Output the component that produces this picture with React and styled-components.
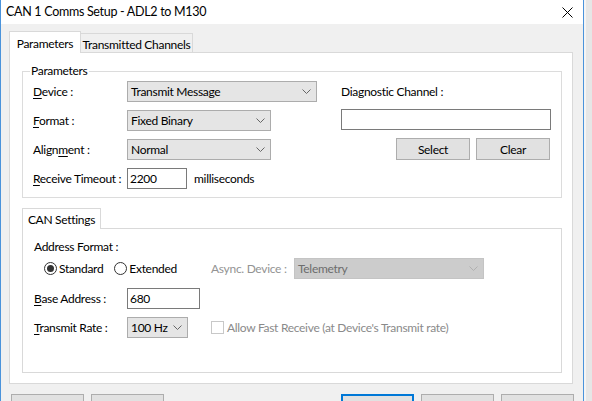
import React from 'react';
import styled, { createGlobalStyle } from 'styled-components';

const Global = createGlobalStyle`
  html, body { margin: 0; padding: 0; background: #e4e4e4; }
  body { font-family: Lato, "Noto Sans", "Liberation Sans", sans-serif; font-size: 12px; letter-spacing: -0.3px; color: #000; }
  #root { width: 592px; height: 401px; }
`;

const Screen = styled.div`
  width: 592px;
  height: 401px;
  overflow: hidden;
  display: flex;
  background: #e4e4e4;
`;

const Win = styled.div`
  width: 582px;
  flex: none;
  border-left: 1px solid #4a93db;
  border-right: 1px solid #4a93db;
  display: flex;
  flex-direction: column;
  background: #f0f0f0;
`;

const Backdrop = styled.div`
  flex: 1;
  background: #e6e6e6;
  border-left: 2px solid #f4f4f4;
`;

const TitleBar = styled.div`
  height: 24px;
  flex: none;
  background: #fff;
  display: flex;
  align-items: center;
  justify-content: space-between;
  padding: 0 10px 0 5px;
`;

const Title = styled.div`
  font-size: 12.5px;
  line-height: 18px;
  color: #000;
`;

const Body = styled.div`
  display: flex;
  flex-direction: column;
  padding: 7px 10px 0 8px;
`;

const TabStrip = styled.div`
  display: flex;
  align-items: flex-end;
  height: 21px;
`;

const Tab = styled.div`
  box-sizing: border-box;
  width: ${p => p.$w}px;
  height: ${p => (p.$active ? 22 : 19)}px;
  margin-bottom: ${p => (p.$active ? -1 : 0)}px;
  margin-left: ${p => (p.$active ? 0 : -1)}px;
  position: relative;
  z-index: ${p => (p.$active ? 2 : 1)};
  background: ${p => (p.$active ? '#fff' : '#f0f0f0')};
  border: 1px solid #d9d9d9;
  border-bottom: none;
  display: flex;
  align-items: center;
  justify-content: center;
  padding-top: ${p => (p.$active ? 1 : 2)}px;
  white-space: nowrap;
`;

const TabPanel = styled.div`
  box-sizing: border-box;
  height: 332px;
  background: #fff;
  border: 1px solid #d9d9d9;
  padding: 10px 10px 0 12px;
  display: flex;
  flex-direction: column;
`;

const Group = styled.fieldset`
  margin: 0;
  padding: 0;
  min-width: 0;
  border: 1px solid #dcdcdc;
`;

const Legend = styled.legend`
  padding: 0 1px;
  margin-left: 7px;
  line-height: 16px;
`;

const GroupContent = styled.div`
  display: flex;
  padding: 2px 0 8px 10px;
`;

const LeftCol = styled.div`
  width: 308px;
  display: flex;
  flex-direction: column;
  gap: 8px;
`;

const RightCol = styled.div`
  width: 210px;
  display: flex;
  flex-direction: column;
`;

const Row = styled.div`
  display: flex;
  align-items: center;
  height: 21px;
  margin-top: ${p => p.$mt || 0}px;
  white-space: nowrap;
`;

const Label = styled.div`
  width: ${p => p.$w}px;
  flex: none;
  white-space: nowrap;
  color: ${p => (p.$disabled ? '#939393' : '#000')};
`;

const Key = styled.span`
  text-decoration: underline;
  text-underline-offset: 2px;
`;

const Combo = styled.div`
  box-sizing: border-box;
  width: ${p => p.$w}px;
  height: 21px;
  flex: none;
  display: flex;
  align-items: center;
  justify-content: space-between;
  padding: 0 5px 0 3px;
  border: 1px solid ${p => (p.$disabled ? '#c4c4c4' : '#acacac')};
  background: ${p => (p.$disabled ? '#cccccc' : '#e5e5e5')};
  color: ${p => (p.$disabled ? '#6d6d6d' : '#000')};
  white-space: nowrap;
`;

const TextBox = styled.div`
  box-sizing: border-box;
  width: ${p => p.$w}px;
  height: 21px;
  flex: none;
  border: 1px solid #7a7a7a;
  background: #fff;
  display: flex;
  align-items: center;
  padding-left: 2px;
  margin-top: ${p => p.$mt || 0}px;
`;

const Suffix = styled.span`
  margin-left: 7px;
`;

const ButtonRow = styled.div`
  display: flex;
  justify-content: flex-end;
  gap: 6px;
  padding-right: 1px;
  margin-top: 8px;
`;

const Button = styled.div`
  box-sizing: border-box;
  width: ${p => p.$w || 73}px;
  height: ${p => p.$h || 23}px;
  background: #e1e1e1;
  border: ${p => (p.$default ? '2px solid #0078d7' : '1px solid #adadad')};
  display: flex;
  align-items: center;
  justify-content: center;
  flex: none;
`;

const SubTabStrip = styled.div`
  display: flex;
  align-items: flex-end;
  height: 20px;
  margin-top: 10px;
`;

const SubTab = styled.div`
  box-sizing: border-box;
  width: 79px;
  height: 21px;
  margin-bottom: -1px;
  position: relative;
  z-index: 2;
  background: #fff;
  border: 1px solid #d9d9d9;
  border-bottom: none;
  display: flex;
  align-items: center;
  justify-content: center;
  padding-top: 1px;
  white-space: nowrap;
`;

const SubPanel = styled.div`
  box-sizing: border-box;
  height: 145px;
  background: #fff;
  border: 1px solid #d9d9d9;
  padding: 10px 0 0 11px;
  display: flex;
  flex-direction: column;
`;

const Caption = styled.div`
  line-height: 16px;
  height: 16px;
`;

const RadioGroup = styled.div`
  width: 177px;
  flex: none;
  display: flex;
  align-items: center;
  padding-left: 10px;
  box-sizing: border-box;
`;

const RadioItem = styled.label`
  display: flex;
  align-items: center;
  gap: 2px;
  margin-right: 11px;
`;

const RadioCircle = styled.span`
  box-sizing: border-box;
  width: 13px;
  height: 13px;
  border-radius: 50%;
  border: 1px solid #333;
  background: #fff;
  display: flex;
  align-items: center;
  justify-content: center;
  &::after {
    content: '';
    width: 7px;
    height: 7px;
    border-radius: 50%;
    background: ${p => (p.$checked ? '#333' : 'transparent')};
  }
`;

const CheckItem = styled.div`
  display: flex;
  align-items: center;
  gap: 3px;
  margin-left: 23px;
  color: #8a8a8a;
  white-space: nowrap;
`;

const CheckBox = styled.span`
  box-sizing: border-box;
  width: 13px;
  height: 13px;
  border: 1px solid #c8c8c8;
  background: #fff;
`;

const Footer = styled.div`
  display: flex;
  gap: 7px;
  margin: 10px -1px 0 0;
  padding: 0 0 0 2px;
`;

const Spacer = styled.div`
  flex: 1;
`;

const Chevron = ({ disabled }) => (
  <svg width="9" height="5" viewBox="0 0 9 5">
    <path d="M0.5 0.5 L4.5 4.5 L8.5 0.5" fill="none" stroke={disabled ? '#b0b0b0' : '#666'} strokeWidth="1" />
  </svg>
);

const CloseIcon = () => (
  <svg width="11" height="11" viewBox="0 0 11 11">
    <path d="M0.5 0.5 L10.5 10.5 M10.5 0.5 L0.5 10.5" stroke="#000" strokeWidth="1" fill="none" />
  </svg>
);

export default function App() {
  return (
    <>
      <Global />
      <Screen>
        <Win>
          <TitleBar>
            <Title>CAN 1 Comms Setup - ADL2 to M130</Title>
            <CloseIcon />
          </TitleBar>
          <Body>
            <TabStrip>
              <Tab $active $w={72}>Parameters</Tab>
              <Tab $w={113}>Transmitted Channels</Tab>
            </TabStrip>
            <TabPanel>
              <Group>
                <Legend>Parameters</Legend>
                <GroupContent>
                  <LeftCol>
                    <Row>
                      <Label $w={94}><Key>D</Key>evice :</Label>
                      <Combo $w={190}>Transmit Message<Chevron /></Combo>
                    </Row>
                    <Row>
                      <Label $w={94}><Key>F</Key>ormat :</Label>
                      <Combo $w={144}>Fixed Binary<Chevron /></Combo>
                    </Row>
                    <Row>
                      <Label $w={94}>Align<Key>m</Key>ent :</Label>
                      <Combo $w={144}>Normal<Chevron /></Combo>
                    </Row>
                    <Row>
                      <Label $w={94}><Key>R</Key>eceive Timeout :</Label>
                      <TextBox $w={60}>2200</TextBox>
                      <Suffix>milliseconds</Suffix>
                    </Row>
                  </LeftCol>
                  <RightCol>
                    <Row>Diagnostic Channel :</Row>
                    <TextBox $w={210} $mt={7} />
                    <ButtonRow>
                      <Button $w={74} $h={22}>Select</Button>
                      <Button $w={74} $h={22}>Clear</Button>
                    </ButtonRow>
                  </RightCol>
                </GroupContent>
              </Group>
              <SubTabStrip>
                <SubTab>CAN Settings</SubTab>
              </SubTabStrip>
              <SubPanel>
                <Caption>Address Format :</Caption>
                <Row $mt={3}>
                  <RadioGroup>
                    <RadioItem><RadioCircle $checked />Standard</RadioItem>
                    <RadioItem><RadioCircle />Extended</RadioItem>
                  </RadioGroup>
                  <Label $w={83} $disabled>Async. Device :</Label>
                  <Combo $w={190} $disabled>Telemetry<Chevron disabled /></Combo>
                </Row>
                <Row $mt={9}>
                  <Label $w={93}><Key>B</Key>ase Address :</Label>
                  <TextBox $w={73}>680</TextBox>
                </Row>
                <Row $mt={8}>
                  <Label $w={93}><Key>T</Key>ransmit Rate :</Label>
                  <Combo $w={61}>100 Hz<Chevron /></Combo>
                  <CheckItem><CheckBox />Allow Fast Receive (at Device's Transmit rate)</CheckItem>
                </Row>
              </SubPanel>
            </TabPanel>
            <Footer>
              <Button>Load</Button>
              <Button>Save</Button>
              <Spacer />
              <Button $default>OK</Button>
              <Button>Cancel</Button>
              <Button>Help</Button>
            </Footer>
          </Body>
        </Win>
        <Backdrop />
      </Screen>
    </>
  );
}
